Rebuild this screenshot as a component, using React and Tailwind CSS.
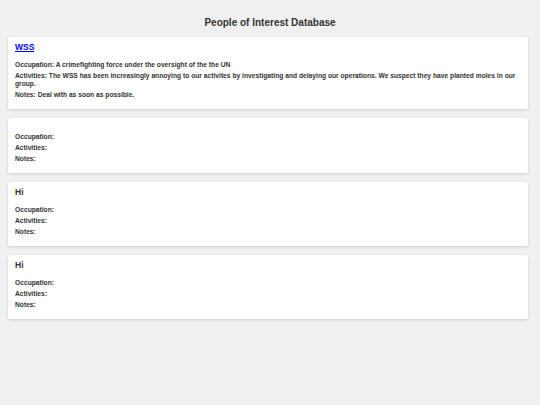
import React from 'react';

const people = [
  {
    name: 'WSS',
    link: true,
    occupation: 'A crimefighting force under the oversight of the the UN',
    activities:
      'The WSS has been increasingly annoying to our activites by investigating and delaying our operations. We suspect they have planted moles in our group.',
    notes: 'Deal with as soon as possible.',
  },
  { name: '', occupation: '', activities: '', notes: '' },
  { name: 'Hi', occupation: '', activities: '', notes: '' },
  { name: 'Hi', occupation: '', activities: '', notes: '' },
];

const PersonCard = ({ person }) => (
  <div className="bg-white w-[520px] ml-[8px] mb-[9.5px] pl-[7px] pr-[5px] pt-[6px] pb-[6.5px] rounded-[2px] shadow-[0_1px_3px_rgba(0,0,0,0.15)]">
    <h2 className="text-[8.5px] leading-[9px] font-bold text-[#333] mb-[9px]">
      {person.link ? (
        <a href="#" className="text-[#0000ee] underline">
          {person.name}
        </a>
      ) : (
        person.name
      )}
    </h2>
    <p className="text-[6.7px] leading-[8px] font-bold text-[#333] mb-[3px]">Occupation: {person.occupation}</p>
    <p className="text-[6.7px] leading-[8px] font-bold text-[#333] mb-[3px]">Activities: {person.activities}</p>
    <p className="text-[6.7px] leading-[8px] font-bold text-[#333] mb-[3px]">Notes: {person.notes}</p>
  </div>
);

export default function App() {
  return (
    <div className="min-h-[405px] bg-[#f0f0f0] pt-[17px] font-['Liberation_Sans',Arial,sans-serif]">
      <h1 className="text-center text-[10px] leading-[12px] font-bold text-[#333] mb-[8px]">
        People of Interest Database
      </h1>
      {people.map((p, i) => (
        <PersonCard key={i} person={p} />
      ))}
    </div>
  );
}
